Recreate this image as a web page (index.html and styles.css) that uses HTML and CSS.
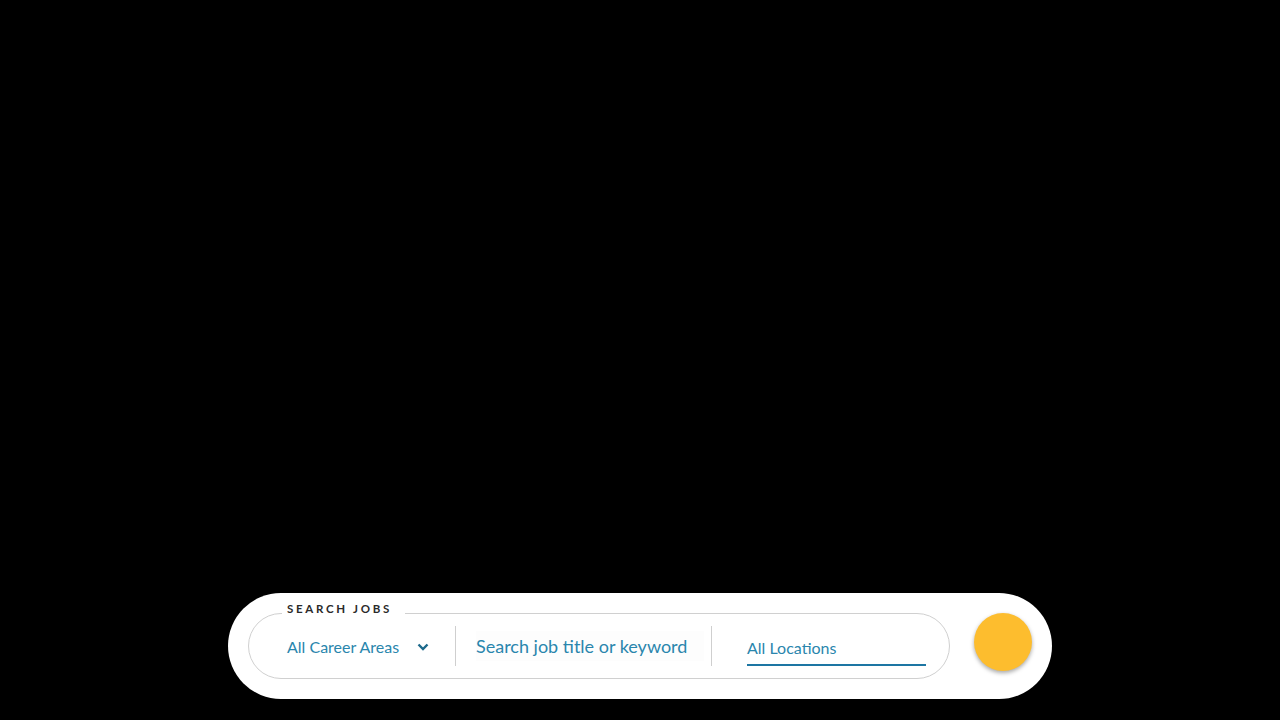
FILE: index.html
```html
<!DOCTYPE html>
<html>
<head>
    <title>Search Jobs</title>
    <link rel="stylesheet" href="styles.css">
</head>
<body>
    <div class="page">
        <form class="search-bar">
            <fieldset class="search-box">
                <legend>SEARCH JOBS</legend>
                <div class="field career">
                    <span>All Career Areas</span>
                    <svg class="chevron" width="12" height="8" viewBox="0 0 12 8"><path d="M1.5 1.5 L6 6 L10.5 1.5" fill="none" stroke="#1d6a8c" stroke-width="2.4"/></svg>
                </div>
                <div class="sep"></div>
                <div class="field keyword">
                    <input type="text" placeholder="Search job title or keyword" />
                </div>
                <div class="sep"></div>
                <div class="field location">
                    <span>All Locations</span>
                </div>
            </fieldset>
            <button type="submit" class="go"></button>
        </form>
    </div>
</body>
</html>
```

FILE: styles.css
```css
body { margin: 0; background: #000; font-family: Lato, "Open Sans", sans-serif; }
.page { width: 1280px; height: 720px; display: flex; flex-direction: column; justify-content: flex-end; align-items: center; padding-bottom: 21px; box-sizing: border-box; }
.search-bar { width: 824px; height: 106px; background: #fff; border-radius: 53px; display: flex; align-items: center; padding: 0 20px; box-sizing: border-box; }
.search-box { width: 702px; height: 66px; margin: 0; padding: 0 0 0 38px; border: 1px solid #d0d0d0; border-radius: 34px; box-sizing: border-box; display: flex; align-items: center; position: relative; flex-shrink: 0; min-width: 0; }
.search-box legend { position: absolute; top: -13px; left: 33px; background: #fff; padding: 0 13px 0 5px; font-size: 11.5px; letter-spacing: 2.7px; font-weight: 700; color: #2a2a2a; line-height: 16px; }
.field { display: flex; align-items: center; height: 40px; box-sizing: border-box; flex-shrink: 0; }
.career { width: 168px; color: #2a86ad; font-size: 16px; margin-top: 0; }
.career span { flex: 1; }
.chevron { margin-right: 26px; margin-top: 2px; }
.sep { width: 1px; height: 40px; background: #cfcfcf; flex-shrink: 0; }
.keyword { width: 255px; padding-left: 20px; }
.keyword input { width: 228px; border: none; outline: none; background: #fdfdfd; font-family: inherit; font-size: 18px; padding: 4px 0; color: #2a86ad; }
.keyword input::placeholder { color: #2a86ad; }
.location { margin-left: 35px; width: 179px; border-bottom: 2px solid #1d76a3; height: 36px; margin-top: 4px; color: #2a86ad; font-size: 16px; padding-top: 1px; }
.go { width: 58px; height: 58px; flex-shrink: 0; border-radius: 50%; background: #fdbd2e; border: none; margin-left: 24px; margin-bottom: 8px; box-shadow: 0 2px 4px rgba(0,0,0,0.35); cursor: pointer; }
```
